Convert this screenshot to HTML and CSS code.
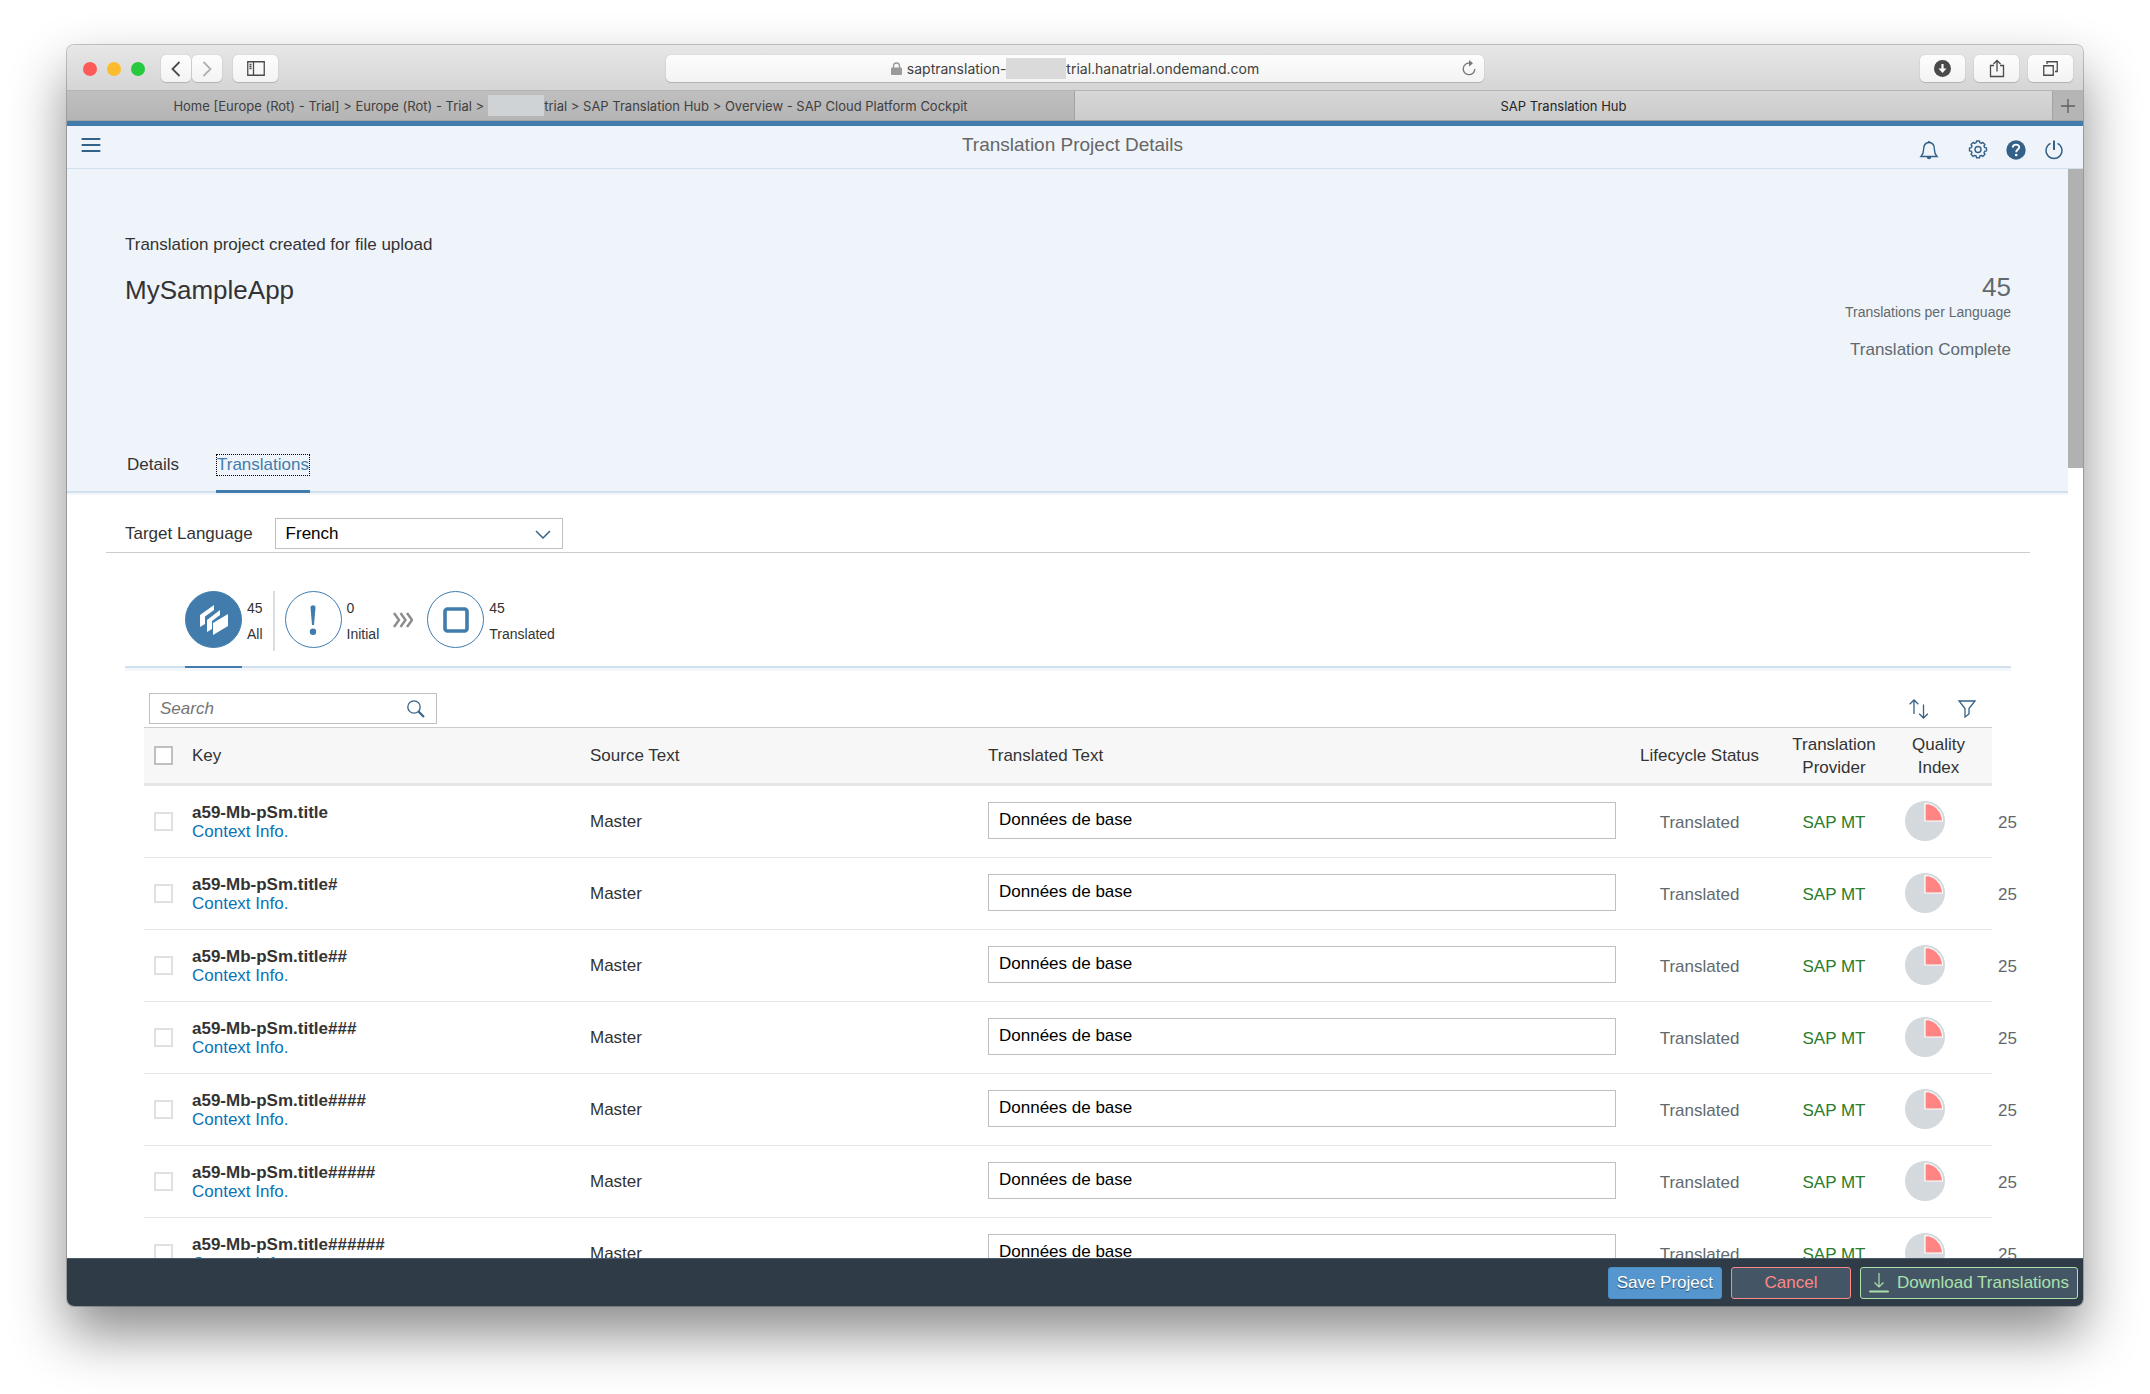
FILE: index.html
```html
<!DOCTYPE html>
<html lang="en">
<head>
<meta charset="utf-8">
<title>SAP Translation Hub</title>
<link rel="stylesheet" href="styles.css">
</head>
<body>
<svg class="sprite" aria-hidden="true">
  <symbol id="pie" viewBox="0 0 40 40">
    <circle cx="20" cy="20" r="20" fill="#d3d9dc"/>
    <path d="M20 20V2.500A17.500 17.500 0 0 1 37.500 20Z" fill="#ff8585" stroke="#fff" stroke-width="1.200"/>
  </symbol>
</svg>

<div class="window">
  <header class="toolbar">
    <div class="toolbar-left">
      <div class="lights"><span class="light red"></span><span class="light yellow"></span><span class="light green"></span></div>
      <div class="nav-pair">
        <button class="chrome-btn narrow" aria-label="Back"><svg width="10" height="16" viewBox="0 0 10 16"><path d="M8.500 1L1.500 8l7 7" fill="none" stroke="#4a4a4a" stroke-width="1.800"/></svg></button>
        <button class="chrome-btn narrow" aria-label="Forward"><svg width="10" height="16" viewBox="0 0 10 16"><path d="M1.500 1l7 7-7 7" fill="none" stroke="#b0b0b0" stroke-width="1.800"/></svg></button>
      </div>
      <button class="chrome-btn" aria-label="Sidebar"><svg width="18" height="15" viewBox="0 0 18 15"><path d="M.75.75h16.500v13.500H.75zM6.500.75v13.500M2.500 3.500h2M2.500 5.500h2M2.500 7.500h2" fill="none" stroke="#4a4a4a" stroke-width="1.300"/></svg></button>
    </div>
    <div class="address">
      <span class="address-text"><svg width="11" height="13" viewBox="0 0 11 13"><path d="M2.500 6V4a3 3 0 0 1 6 0v2" fill="none" stroke="#9a9a9a" stroke-width="1.300"/><rect x="0" y="5.500" width="11" height="7.500" rx="1" fill="#9a9a9a"/></svg><span class="url">saptranslation-</span><span class="redacted url-mask"></span><span>trial.hanatrial.ondemand.com</span></span>
      <button class="reload" aria-label="Reload"><svg width="14" height="17" viewBox="0 0 14 17"><path d="M8 3.200A5.800 5.800 0 1 0 12.800 9" fill="none" stroke="#777" stroke-width="1.300"/><path d="M7 0l4 3.200-4 3.200z" fill="#777"/></svg></button>
    </div>
    <div class="toolbar-right">
      <button class="chrome-btn" aria-label="Downloads"><svg width="17" height="17" viewBox="0 0 17 17"><circle cx="8.500" cy="8.500" r="8.500" fill="#4a4a4a"/><path d="M8.500 4v5" stroke="#fff" stroke-width="2.200"/><path d="M4.500 8.500h8l-4 4.500z" fill="#fff"/></svg></button>
      <button class="chrome-btn" aria-label="Share"><svg width="16" height="19" viewBox="0 0 16 19"><path d="M5 6.500H1.500v11h13v-11H11M8 12.500V1.500M4.500 5L8 1.500 11.500 5" fill="none" stroke="#4a4a4a" stroke-width="1.300"/></svg></button>
      <button class="chrome-btn" aria-label="Show tabs"><svg width="15" height="15" viewBox="0 0 15 15"><path d="M.75 4.750h9.500v9.500H.75zM4 3V.75h10.250V10.500H12" fill="none" stroke="#4a4a4a" stroke-width="1.300"/></svg></button>
    </div>
  </header>

  <nav class="browser-tabs" aria-label="Browser tabs">
    <a class="browser-tab" href="#cockpit"><span>Home [Europe (Rot) - Trial] &gt; Europe (Rot) - Trial &gt; </span><span class="redacted tab-mask"></span><span>trial &gt; SAP Translation Hub &gt; Overview - SAP Cloud Platform Cockpit</span></a>
    <a class="browser-tab current" href="#hub">SAP Translation Hub</a>
    <button class="new-tab" aria-label="New tab"><svg width="14" height="14" viewBox="0 0 14 14"><path d="M7 0v14M0 7h14" stroke="#5c5c5c" stroke-width="1.300"/></svg></button>
  </nav>

  <div class="shell-head">
    <button class="plain menu-btn" aria-label="Menu"><svg width="20" height="20" viewBox="0 0 20 20"><path d="M1.500 4h17M1.500 10h17M1.500 16h17" stroke="#346187" stroke-width="2.200" stroke-linecap="round"/></svg></button>
    <h1 class="shell-title">Translation Project Details</h1>
    <div class="shell-tools">
      <button class="plain bell" aria-label="Notifications"><svg width="20" height="20" viewBox="0 0 20 20"><path d="M2 16.500c2-2 2.500-3 2.500-6.500 0-4 1.500-7.500 5.500-7.500s5.500 3.500 5.500 7.500c0 3.500.5 4.500 2.500 6.500z" fill="none" stroke="#346187" stroke-width="1.400"/><path d="M8.700 2.300a1.300 1.300 0 0 1 2.600 0zM7.800 17h4.400a2.200 2.200 0 0 1-4.400 0z" fill="#346187"/></svg></button>
      <button class="plain" aria-label="Settings"><svg width="20" height="20" viewBox="0 0 20 20"><path d="M8.200 2.700L8.500 1h3l.3 1.700 1.600.7 1.400-1 2.200 2.100-1 1.500.7 1.600 1.800.3v3l-1.800.3-.7 1.600 1 1.400-2.200 2.200-1.400-1-1.600.6-.3 1.800h-3l-.3-1.800-1.600-.6-1.400 1L3 14.200l1-1.400-.7-1.600-1.800-.3v-3l1.800-.3L4 6 3 4.500l2.200-2.100 1.400 1z" fill="none" stroke="#346187" stroke-width="1.400" stroke-linejoin="round"/><circle cx="10" cy="9.500" r="3" fill="none" stroke="#346187" stroke-width="1.400"/></svg></button>
      <button class="plain" aria-label="Help"><svg width="20" height="20" viewBox="0 0 20 20"><circle cx="10" cy="10" r="9.700" fill="#346187"/><path d="M6.800 7.600c0-4 6.400-3.800 6.400-.3 0 2.300-3 2.300-3 4.900" fill="none" stroke="#fff" stroke-width="1.900"/><circle cx="10.200" cy="15" r="1.300" fill="#fff"/></svg></button>
      <button class="plain" aria-label="Log off"><svg width="20" height="20" viewBox="0 0 20 20"><path d="M6.500 3.300a8 8 0 1 0 7 0" fill="none" stroke="#346187" stroke-width="1.400"/><path d="M10 .5v9.500" stroke="#346187" stroke-width="2"/></svg></button>
    </div>
  </div>

  <div class="viewport">
    <main class="page">
      <section class="hero">
        <div class="hero-info">
          <div>
            <p class="text">Translation project created for file upload</p>
            <h2 class="project">MySampleApp</h2>
          </div>
          <div class="stats">
            <p class="count">45</p>
            <p class="count-label">Translations per Language</p>
            <p class="state">Translation Complete</p>
          </div>
        </div>
        <nav class="section-tabs" aria-label="Sections">
          <a class="section-tab" href="#details"><span class="tab-text">Details</span></a>
          <a class="section-tab active" href="#translations"><span class="tab-text">Translations</span></a>
        </nav>
      </section>

      <div class="language-area">
        <div class="language">
          <label for="lang">Target Language</label>
          <div class="select-wrap">
            <select id="lang" class="field"><option>French</option></select>
            <svg class="select-arrow" width="16" height="10" viewBox="0 0 16 10"><path d="M1 1l7 7 7-7" fill="none" stroke="#346187" stroke-width="1.500"/></svg>
          </div>
        </div>
      </div>

      <div class="filters">
        <button class="filter chosen">
          <span class="disc"><svg width="28" height="30" viewBox="0 0 28 30"><g fill="#fff"><path d="M0 10L14 0v5L5 11.500V19l-5 3z"/><path d="M7 15L20 5v5l-8 6v8l-5 3z"/><path d="M13 18L28 9v12L13 30z"/></g></svg></span>
          <span class="legend"><span>45</span><span>All</span></span>
        </button>
        <span class="divider"></span>
        <button class="filter">
          <span class="disc"><svg width="8" height="30" viewBox="0 0 8 30"><path d="M1.500 2.500C1.500-.5 6.500-.5 6.500 2.500L5 20H3z" fill="#427cac"/><circle cx="4" cy="26.700" r="3.200" fill="#427cac"/></svg></span>
          <span class="legend"><span>0</span><span>Initial</span></span>
        </button>
        <svg class="steps" width="20" height="16" viewBox="0 0 20 16"><path d="M1 1l5 7-5 7M7.500 1l5 7-5 7M14 1l5 7-5 7" fill="none" stroke="#8c8c8c" stroke-width="2.400"/></svg>
        <button class="filter">
          <span class="disc"><svg width="26" height="26" viewBox="0 0 26 26"><rect x="2" y="2" width="22" height="22" rx="2.500" fill="none" stroke="#427cac" stroke-width="3.600"/></svg></span>
          <span class="legend"><span>45</span><span>Translated</span></span>
        </button>
      </div>

      <section class="list">
        <div class="list-bar">
          <div class="search">
            <input class="field search-input" type="search" placeholder="Search" aria-label="Search">
            <svg class="search-icon" width="18" height="18" viewBox="0 0 18 18"><circle cx="7" cy="7" r="6.200" fill="none" stroke="#346187" stroke-width="1.300"/><path d="M11.500 11.500l5.500 5.500" stroke="#346187" stroke-width="2.200"/></svg>
          </div>
          <div class="list-actions">
            <button class="plain" aria-label="Sort"><svg width="20" height="20" viewBox="0 0 20 20"><path d="M5 15V1M.7 5.300L5 1l4.300 4.300M14.500 5.500v13.500M10.200 14.700l4.300 4.300 4.300-4.300" fill="none" stroke="#346187" stroke-width="1.300"/></svg></button>
            <button class="plain" aria-label="Filter"><svg width="20" height="20" viewBox="0 0 20 20"><path d="M2 2h16l-6 7.500v5.500L8 18V9.500z" fill="none" stroke="#346187" stroke-width="1.300"/></svg></button>
          </div>
        </div>
        <table class="grid">
          <colgroup><col class="c-check"><col class="c-key"><col class="c-source"><col><col class="c-status"><col class="c-provider"><col class="c-quality"></colgroup>
          <thead>
            <tr><th><input class="tick strong" type="checkbox" aria-label="Select all"></th><th>Key</th><th>Source Text</th><th>Translated Text</th><th class="mid">Lifecycle Status</th><th class="mid">Translation Provider</th><th class="mid">Quality<br>Index</th></tr>
          </thead>
          <tbody>
            <tr><td><input class="tick" type="checkbox" aria-label="Select row 1"></td><td><b class="key">a59-Mb-pSm.title</b><a class="context" href="#c1">Context Info.</a></td><td>Master</td><td class="edit"><input class="field translation" value="Données de base" aria-label="Translated text 1"></td><td class="mid status">Translated</td><td class="mid provider">SAP MT</td><td class="quality"><div class="score"><svg width="40" height="40"><use href="#pie"/></svg><span>25</span></div></td></tr>
            <tr><td><input class="tick" type="checkbox" aria-label="Select row 2"></td><td><b class="key">a59-Mb-pSm.title#</b><a class="context" href="#c2">Context Info.</a></td><td>Master</td><td class="edit"><input class="field translation" value="Données de base" aria-label="Translated text 2"></td><td class="mid status">Translated</td><td class="mid provider">SAP MT</td><td class="quality"><div class="score"><svg width="40" height="40"><use href="#pie"/></svg><span>25</span></div></td></tr>
            <tr><td><input class="tick" type="checkbox" aria-label="Select row 3"></td><td><b class="key">a59-Mb-pSm.title##</b><a class="context" href="#c3">Context Info.</a></td><td>Master</td><td class="edit"><input class="field translation" value="Données de base" aria-label="Translated text 3"></td><td class="mid status">Translated</td><td class="mid provider">SAP MT</td><td class="quality"><div class="score"><svg width="40" height="40"><use href="#pie"/></svg><span>25</span></div></td></tr>
            <tr><td><input class="tick" type="checkbox" aria-label="Select row 4"></td><td><b class="key">a59-Mb-pSm.title###</b><a class="context" href="#c4">Context Info.</a></td><td>Master</td><td class="edit"><input class="field translation" value="Données de base" aria-label="Translated text 4"></td><td class="mid status">Translated</td><td class="mid provider">SAP MT</td><td class="quality"><div class="score"><svg width="40" height="40"><use href="#pie"/></svg><span>25</span></div></td></tr>
            <tr><td><input class="tick" type="checkbox" aria-label="Select row 5"></td><td><b class="key">a59-Mb-pSm.title####</b><a class="context" href="#c5">Context Info.</a></td><td>Master</td><td class="edit"><input class="field translation" value="Données de base" aria-label="Translated text 5"></td><td class="mid status">Translated</td><td class="mid provider">SAP MT</td><td class="quality"><div class="score"><svg width="40" height="40"><use href="#pie"/></svg><span>25</span></div></td></tr>
            <tr><td><input class="tick" type="checkbox" aria-label="Select row 6"></td><td><b class="key">a59-Mb-pSm.title#####</b><a class="context" href="#c6">Context Info.</a></td><td>Master</td><td class="edit"><input class="field translation" value="Données de base" aria-label="Translated text 6"></td><td class="mid status">Translated</td><td class="mid provider">SAP MT</td><td class="quality"><div class="score"><svg width="40" height="40"><use href="#pie"/></svg><span>25</span></div></td></tr>
            <tr><td><input class="tick" type="checkbox" aria-label="Select row 7"></td><td><b class="key">a59-Mb-pSm.title######</b><a class="context" href="#c7">Context Info.</a></td><td>Master</td><td class="edit"><input class="field translation" value="Données de base" aria-label="Translated text 7"></td><td class="mid status">Translated</td><td class="mid provider">SAP MT</td><td class="quality"><div class="score"><svg width="40" height="40"><use href="#pie"/></svg><span>25</span></div></td></tr>
          </tbody>
        </table>
      </section>
    </main>
    <div class="scroll-track"><div class="scroll-thumb"></div></div>
  </div>

  <footer class="actions">
    <button class="action save">Save Project</button>
    <button class="action cancel">Cancel</button>
    <button class="action download"><svg width="20" height="20" viewBox="0 0 20 20"><path d="M10 0v14M5.500 9.500L10 14l4.500-4.500" fill="none" stroke="#abe2ab" stroke-width="1.200"/><path d="M1 18.500h18" stroke="#abe2ab" stroke-width="2" stroke-linecap="round"/></svg>Download Translations</button>
  </footer>
</div>
</body>
</html>
```

FILE: styles.css
```css
* { box-sizing: border-box; }

body {
  margin: 0;
  padding: 45px 67px 88px;
  background: #fff;
  color: #333;
  font: 17px/20px "Liberation Sans", Arial, sans-serif;
  overflow: hidden;
}

p, h1, h2 { margin: 0; font-weight: normal; }
a { color: inherit; text-decoration: none; }
button, input, select { font: inherit; color: inherit; }
svg { display: block; flex: none; }
.sprite { position: absolute; width: 0; height: 0; }

.window {
  display: flex;
  flex-direction: column;
  height: calc(100vh - 133px);
  border-radius: 7px;
  background: #fff;
  overflow: hidden;
  box-shadow: 0 0 0 1px rgba(0, 0, 0, .22), 0 28px 55px rgba(0, 0, 0, .46);
}

/* Browser chrome */
.toolbar {
  flex: none;
  display: grid;
  grid-template-columns: 1fr 818px 1fr;
  align-items: center;
  height: 45px;
  padding: 2px 10px 0 16px;
  background: linear-gradient(#e7e7e7, #d5d5d5);
  font: 14px/20px Inter, sans-serif;
}
.toolbar-left, .toolbar-right, .lights, .nav-pair { display: flex; align-items: center; }
.toolbar-right { justify-content: flex-end; gap: 9px; }
.lights { gap: 10px; margin-right: 16px; }
.light { width: 14px; height: 14px; border-radius: 50%; }
.red { background: #fc5b57; }
.yellow { background: #fdbc2e; }
.green { background: #27c93f; }
.nav-pair { gap: 1px; margin-right: 11px; }
.chrome-btn {
  display: flex;
  align-items: center;
  justify-content: center;
  width: 45px;
  height: 27px;
  padding: 0;
  border: 0;
  border-radius: 5px;
  background: linear-gradient(#fdfdfd, #f3f3f3);
  box-shadow: 0 0 1px rgba(0, 0, 0, .3), 0 1px 1px rgba(0, 0, 0, .15);
}
.narrow { width: 30px; }
.address {
  display: flex;
  align-items: center;
  height: 27px;
  margin-left: -3px;
  margin-right: 3px;
  padding: 0 8px 0 22px;
  border-radius: 5px;
  background: linear-gradient(#fdfdfd, #f3f3f3);
  box-shadow: 0 0 1px rgba(0, 0, 0, .3), 0 1px 1px rgba(0, 0, 0, .15);
  color: #404040;
}
.address-text { flex: 1; display: flex; align-items: center; justify-content: center; }
.url { margin-left: 5px; }
.redacted { flex: none; height: 21px; }
.url-mask { width: 60px; background: #dadada; }
.tab-mask { width: 56px; margin-left: 4px; background: #cfd3d6; }
.reload { padding: 0; border: 0; background: none; }

.browser-tabs {
  flex: none;
  display: flex;
  height: 31px;
  border-top: 1px solid #b4b4b4;
  border-bottom: 1px solid #a3a3a3;
  font: 13px/20px Inter, sans-serif;
}
.browser-tab {
  flex: 1;
  display: flex;
  align-items: center;
  justify-content: center;
  background: linear-gradient(#bfbfbf, #b5b5b5);
  color: #404040;
  white-space: nowrap;
}
.browser-tab.current {
  flex: 0 0 979px;
  border-left: 1px solid #a3a3a3;
  border-right: 1px solid #a3a3a3;
  background: linear-gradient(#d7d7d7, #cbcbcb);
  color: #262626;
}
.new-tab {
  display: flex;
  align-items: center;
  justify-content: center;
  width: 30px;
  padding: 0;
  border: 0;
  background: #b5b5b5;
}

/* Application header */
.plain { padding: 0; border: 0; background: none; }
.shell-head {
  flex: none;
  display: grid;
  grid-template-columns: 1fr auto 1fr;
  align-items: start;
  height: 48px;
  padding: 9px 19px 0 14px;
  border-top: 5px solid #427cac;
  border-bottom: 1px solid #d1e0ee;
  background: #eff4fb;
}
.shell-title { color: #666; font-size: 19px; }
.shell-tools { display: flex; justify-content: flex-end; gap: 18px; padding-top: 5px; }
.bell { margin-right: 11px; }

.viewport { flex: 1; display: flex; min-height: 0; }
.page { flex: 1; min-width: 0; overflow: hidden; }
.scroll-track { flex: none; width: 15px; background: #fff; }
.scroll-thumb { height: 27.5%; background: #b1b1b1; }

/* Project summary */
.hero {
  display: flex;
  flex-direction: column;
  justify-content: space-between;
  min-height: 324px;
  padding: 66px 57px 0 58px;
  border-bottom: 2px solid #d1e0ee;
  background: #eff4fb;
}
.hero-info { display: flex; justify-content: space-between; }
.project { margin-top: 20px; font-size: 26px; line-height: 30px; }
.stats { padding-top: 37px; color: #5f696e; text-align: right; }
.count { font-size: 26px; line-height: 30px; }
.count-label { font-size: 14px; }
.state { margin-top: 18px; }
.section-tabs { display: flex; gap: 36px; padding-left: 1px; }
.section-tab {
  margin-bottom: -2px;
  padding-bottom: 14px;
  border-bottom: 3px solid transparent;
}
.tab-text { display: block; border: 1px solid transparent; }
.active { border-bottom-color: #427cac; color: #427cac; }
.active .tab-text { border: 1px dotted #000; }

/* Form fields */
.field {
  display: block;
  width: 100%;
  height: 31px;
  margin: 0;
  padding: 0 10px;
  border: 1px solid #bfbfbf;
  border-radius: 0;
  background: #fff;
  color: #000;
  appearance: none;
  outline: none;
}
.language-area { padding: 0 38px 0 39px; border-top: 2px solid #f3f7fb; }
.language {
  display: flex;
  align-items: center;
  gap: 22px;
  padding: 23px 19px 3px;
  border-bottom: 1px solid #ccc;
}
.select-wrap, .search { position: relative; width: 288px; }
.select-arrow { position: absolute; right: 12px; top: 12px; pointer-events: none; }

/* Status filters */
.filters {
  display: flex;
  align-items: flex-start;
  margin: 38px 57px 0 58px;
  padding: 0 60px 15px;
  border-bottom: 2px solid #d1e0ee;
  box-shadow: 0 3px 0 #f3f7fb;
}
.filter {
  position: relative;
  display: flex;
  gap: 5px;
  padding: 0;
  border: 0;
  background: none;
  font-size: 14px;
}
.disc {
  display: flex;
  align-items: center;
  justify-content: center;
  width: 57px;
  height: 57px;
  border: 1px solid #427cac;
  border-radius: 50%;
}
.chosen .disc { background: #427cac; }
.chosen::after {
  content: "";
  position: absolute;
  left: 0;
  top: 75px;
  width: 57px;
  height: 2px;
  background: #427cac;
}
.legend { display: flex; flex-direction: column; gap: 6px; padding-top: 7px; text-align: left; }
.divider { width: 2px; height: 60px; margin: 0 10px; background: #ddd; }
.steps { margin: 21px 14px 0; }

/* Translations table */
.list { margin: 25px 76px 0 77px; }
.list-bar { display: flex; justify-content: space-between; align-items: center; padding: 0 15px 3px 5px; }
.search-input { padding-right: 36px; }
.search-input::placeholder { color: #757575; font-style: italic; opacity: 1; }
.search-icon { position: absolute; right: 12px; top: 7px; }
.list-actions { display: flex; gap: 28px; }
.grid {
  width: 100%;
  table-layout: fixed;
  border-collapse: separate;
  border-spacing: 0;
}
.c-check { width: 42px; }
.c-key, .c-source { width: 398px; }
.c-status { width: 167px; }
.c-provider { width: 102px; }
.c-quality { width: 107px; }
.grid th {
  height: 59px;
  padding: 0 6px;
  border-top: 1px solid #ccc;
  border-bottom: 3px solid #e5e5e5;
  background: #f7f7f7;
  font-weight: normal;
  line-height: 23px;
  text-align: left;
}
.grid td { height: 72px; padding: 0 6px; border-bottom: 1px solid #e5e5e5; }
.grid .mid { text-align: center; }
.tick {
  display: block;
  width: 19px;
  height: 19px;
  margin: 0 4px;
  border: 2px solid #e0e0e0;
  background: #fff;
  appearance: none;
}
.strong { border-color: #bfbfbf; }
.key, .context { display: block; line-height: 19px; }
.context { color: #0a73b8; }
.grid .edit { padding-right: 0; padding-bottom: 3px; }
.translation { height: 37px; }
.status, .score { color: #5f696e; }
.provider { color: #2b7c2b; }
.grid .status, .grid .provider { padding-top: 2px; }
.grid .quality { padding: 0 0 2px 20px; }
.score { display: flex; align-items: center; gap: 53px; }
.score span { padding-top: 4px; }

/* Bottom action bar */
.actions {
  flex: none;
  display: flex;
  justify-content: flex-end;
  align-items: center;
  gap: 9px;
  height: 48px;
  padding-right: 5px;
  border-top: 1px solid #4b5a69;
  background: #2f3c48;
}
.action {
  display: flex;
  align-items: center;
  justify-content: center;
  height: 32px;
  padding: 0 8px;
  border: 1px solid;
  border-radius: 3px;
  background: #445565;
  white-space: nowrap;
}
.save { border-color: #4a90c8; background: #5496cd; color: #fff; text-shadow: 0 1px 1px rgba(0, 0, 0, .5); }
.cancel { width: 120px; border-color: #ff8888; color: #ff8888; }
.download { gap: 8px; border-color: #abe2ab; color: #abe2ab; }
```
